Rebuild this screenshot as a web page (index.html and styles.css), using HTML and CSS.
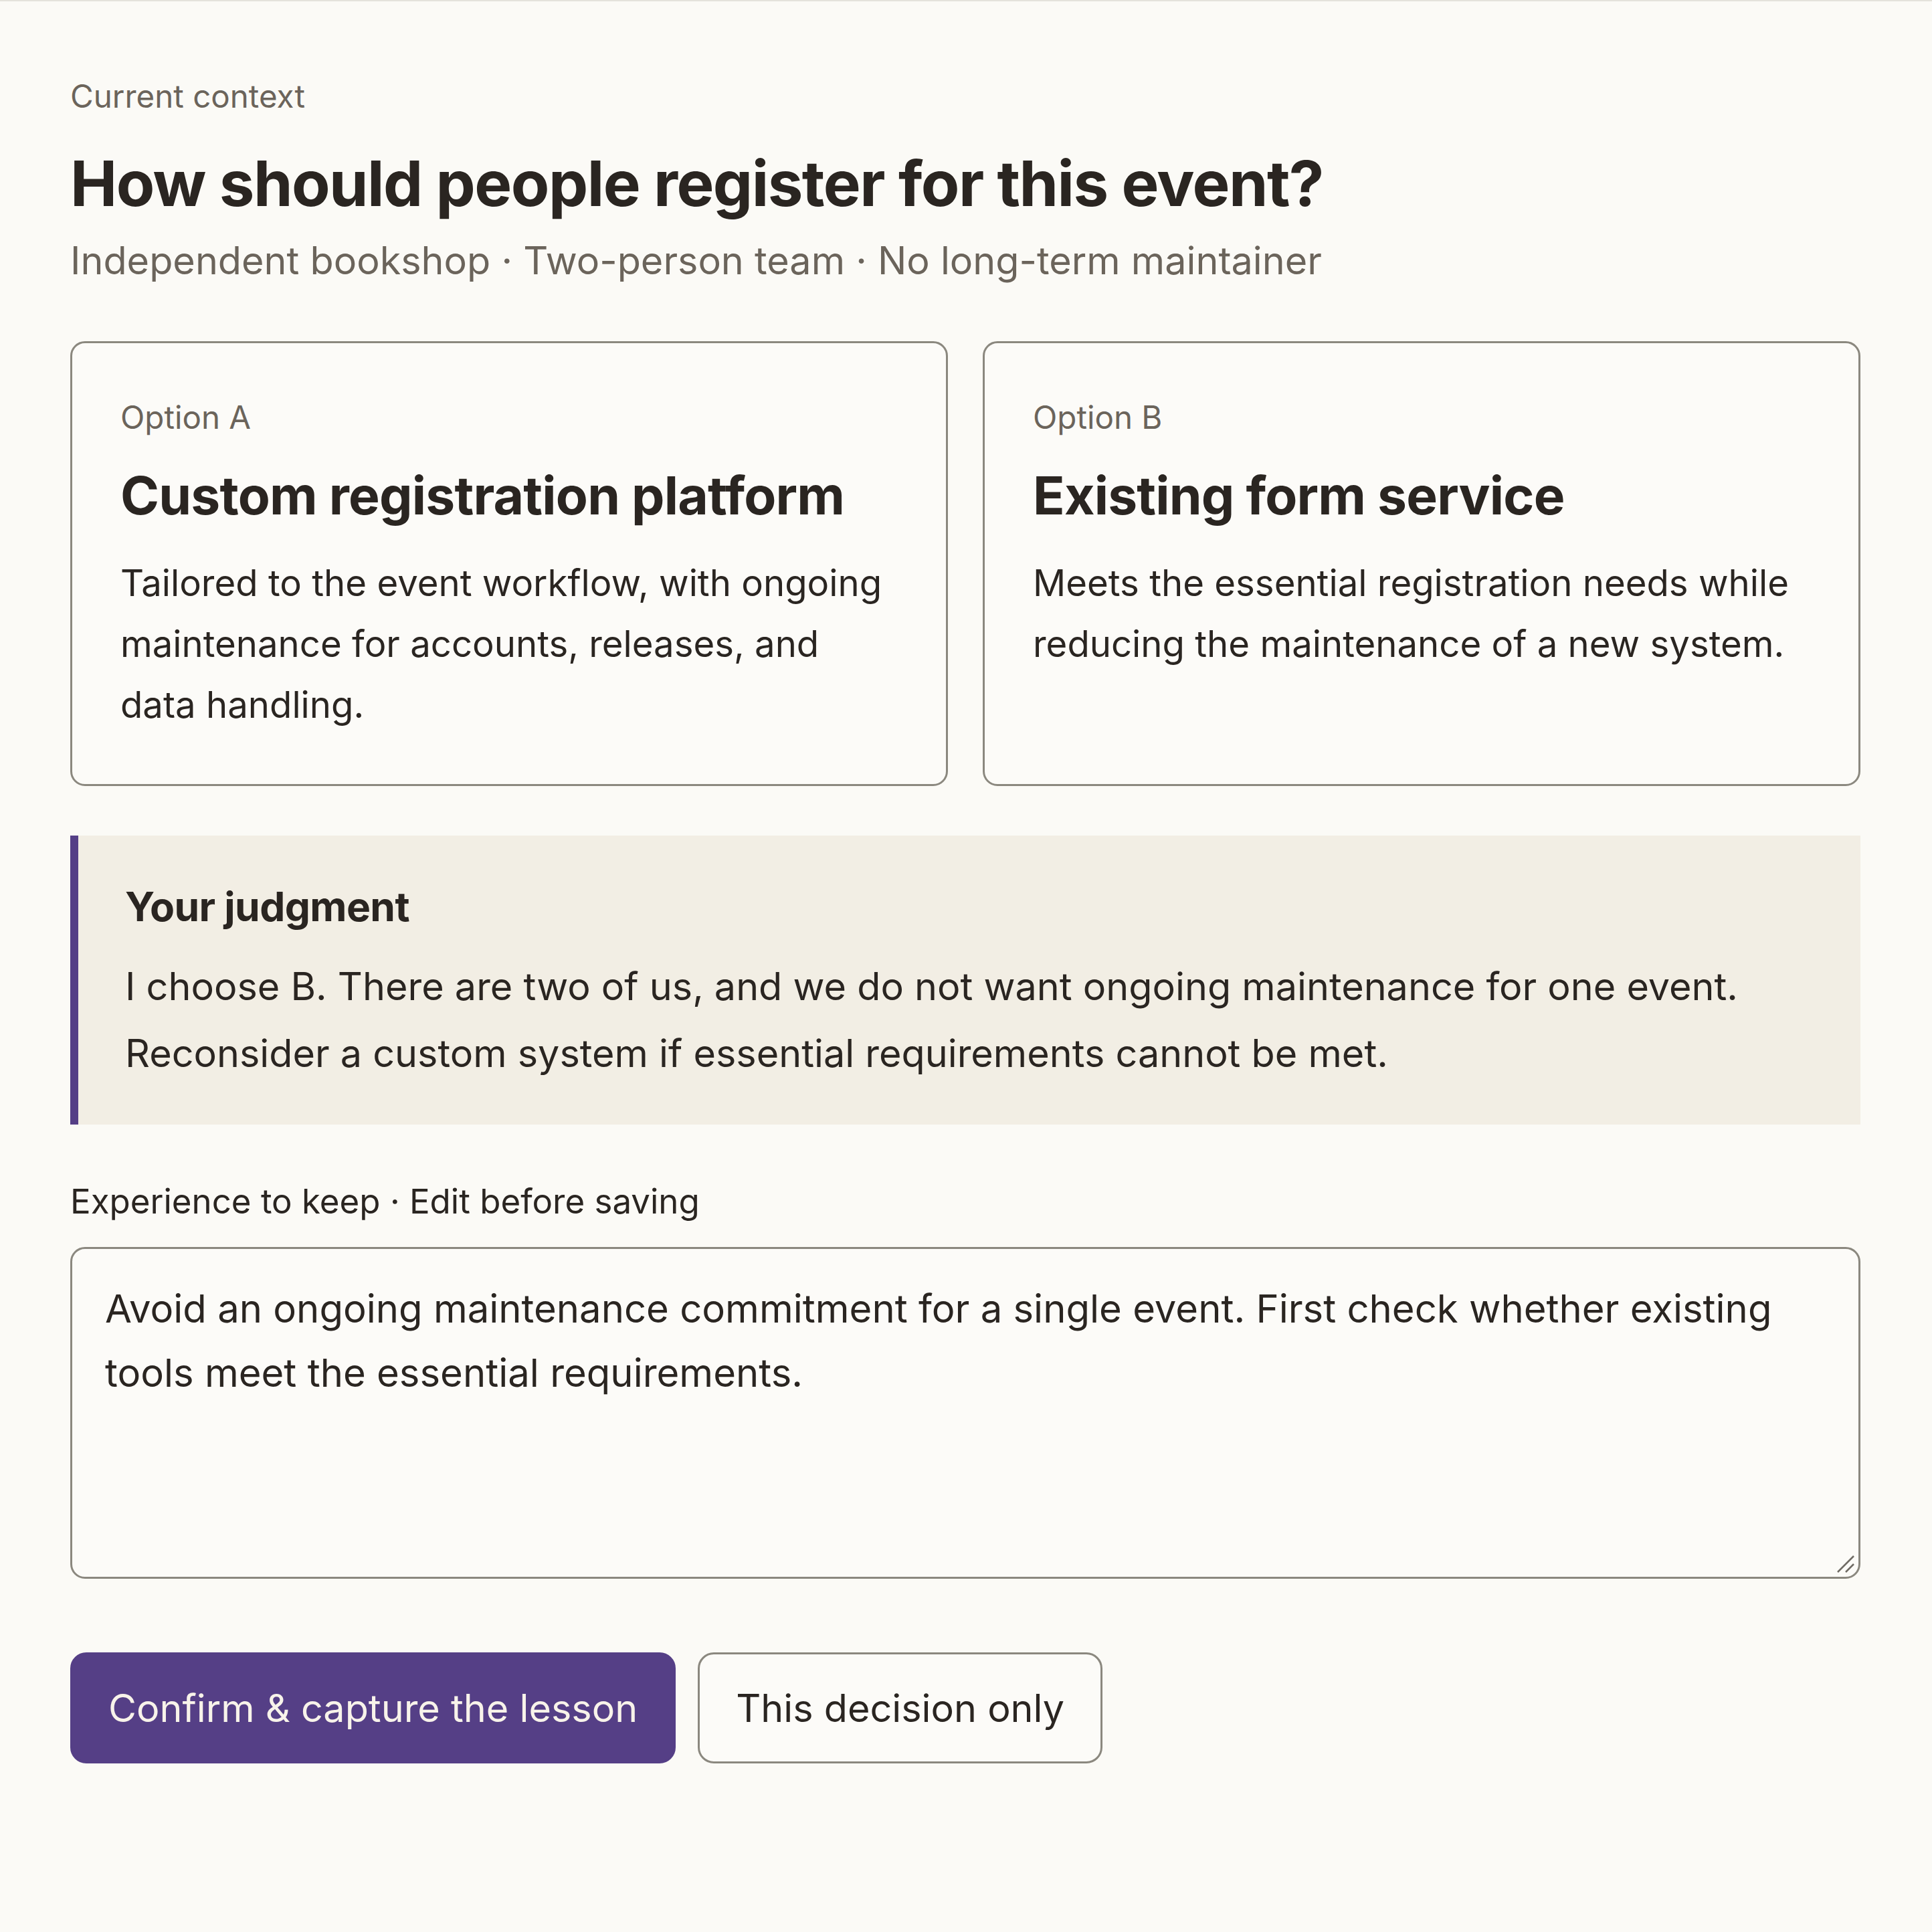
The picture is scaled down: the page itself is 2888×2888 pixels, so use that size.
FILE: index.html
```html
<!DOCTYPE html>
<html lang="en">
<head>
    <meta charset="UTF-8">
    <meta name="viewport" content="width=device-width, initial-scale=1.0">
    <title>Decision review</title>
    <link rel="stylesheet" href="styles.css">
</head>
<body>

    <div class="page">
        <p class="eyebrow">Current context</p>
        <h1>How should people register for this event?</h1>
        <p class="meta">Independent bookshop · Two-person team · No long-term maintainer</p>

        <div class="options">
            <div class="option">
                <p class="option-label">Option A</p>
                <h2>Custom registration platform</h2>
                <p class="option-text">Tailored to the event workflow, with ongoing maintenance for accounts, releases, and data handling.</p>
            </div>
            <div class="option">
                <p class="option-label">Option B</p>
                <h2>Existing form service</h2>
                <p class="option-text">Meets the essential registration needs while reducing the maintenance of a new system.</p>
            </div>
        </div>

        <div class="judgment">
            <h3>Your judgment</h3>
            <p>I choose B. There are two of us, and we do not want ongoing maintenance for one event. Reconsider a custom system if essential requirements cannot be met.</p>
        </div>

        <form class="lesson">
            <label for="lesson">Experience to keep · Edit before saving</label>
            <div class="field">
                <textarea id="lesson" name="lesson">Avoid an ongoing maintenance commitment for a single event. First check whether existing tools meet the essential requirements.</textarea>
                <!-- resize grip -->
                <svg class="grip" width="30" height="30" viewBox="0 0 30 30">
                    <line x1="4" y1="28" x2="28" y2="4" stroke="#6f6b64" stroke-width="2.5"/>
                    <line x1="16" y1="28" x2="28" y2="16" stroke="#6f6b64" stroke-width="2.5"/>
                </svg>
            </div>
            <div class="actions">
                <button type="submit" class="primary">Confirm &amp; capture the lesson</button>
                <button type="button" class="secondary">This decision only</button>
            </div>
        </form>
    </div>

</body>
</html>
```

FILE: styles.css
```css
html {
    border-top: 2px solid #e4e2db;
}
body {
    font-family: Inter, "Noto Sans", sans-serif;
    background-color: #fbfaf6;
    color: #2a2521;
    margin: 0;
}
.page {
    padding: 110px 107px 200px 105px;
}
p, h1, h2, h3 {
    margin: 0;
}
.eyebrow {
    font-size: 47.5px;
    line-height: 64px;
    color: #6b645b;
}
h1 {
    margin-top: 42px;
    font-size: 94px;
    line-height: 113px;
    font-weight: 700;
    letter-spacing: -0.016em;
}
.meta {
    margin-top: 19px;
    font-size: 57.5px;
    line-height: 78px;
    color: #6b645b;
}
.options {
    margin-top: 82px;
    display: grid;
    grid-template-columns: 1fr 1fr;
    gap: 52px;
}
.option {
    border: 3px solid #8b887f;
    border-radius: 22px;
    padding: 79px 72px 73px;
    background: #fcfbf8;
}
.option-label {
    font-size: 47.5px;
    line-height: 64px;
    color: #6b645b;
}
.option h2 {
    margin-top: 37px;
    font-size: 78.5px;
    line-height: 95px;
    font-weight: 700;
    letter-spacing: -0.01em;
}
.option-text {
    margin-top: 38px;
    font-size: 54.5px;
    line-height: 91px;
}
.judgment {
    margin-top: 74px;
    background: #f2eee4;
    border-left: 12px solid #553f86;
    padding: 67px 70px 57px;
}
.judgment h3 {
    font-size: 60.5px;
    line-height: 78px;
    font-weight: 700;
    letter-spacing: -0.01em;
}
.judgment p {
    margin-top: 30px;
    font-size: 57.5px;
    line-height: 100px;
}
.lesson {
    margin-top: 80px;
}
.lesson label {
    display: block;
    font-size: 51px;
    line-height: 70px;
}
.field {
    position: relative;
    margin-top: 33px;
}
textarea {
    display: block;
    box-sizing: border-box;
    width: 100%;
    height: 496px;
    padding: 41px 49px;
    border: 3px solid #8b887f;
    border-radius: 22px;
    background: #fcfbf8;
    color: #2a2521;
    font-family: Inter, "Noto Sans", sans-serif;
    font-size: 58px;
    line-height: 96px;
    resize: none;
}
.grip {
    position: absolute;
    right: 8px;
    bottom: 8px;
}
.actions {
    margin-top: 110px;
    display: flex;
    gap: 33px;
}
button {
    font-family: Inter, "Noto Sans", sans-serif;
    font-size: 57.5px;
    line-height: 78px;
    padding: 41px 54px;
    border-radius: 24px;
    cursor: pointer;
}
.primary {
    background-color: #553f86;
    border: 3px solid #553f86;
    color: #f8f3ea;
}
.secondary {
    background-color: #fcfbf8;
    border: 3px solid #8b887f;
    color: #2a2521;
}
```
